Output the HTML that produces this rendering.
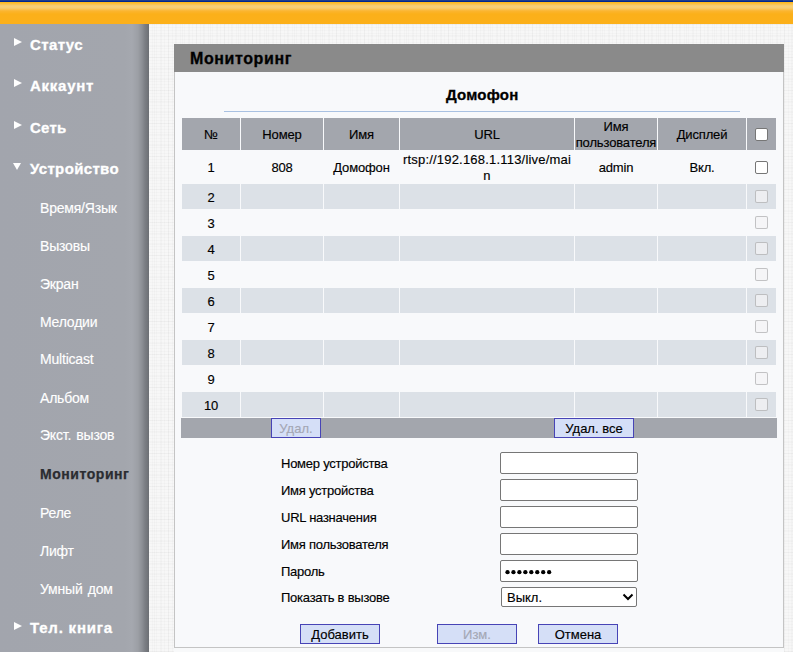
<!DOCTYPE html>
<html><head><meta charset="utf-8"><style>
*{box-sizing:border-box}
html,body{margin:0;padding:0;width:793px;height:652px;overflow:hidden}
body{font-family:"Liberation Sans",sans-serif;-webkit-text-stroke:0.15px currentColor;background-color:#f7f7f7;background-image:repeating-linear-gradient(90deg,rgba(0,0,0,0.016) 0,rgba(0,0,0,0.016) 1px,transparent 1px,transparent 4px),repeating-linear-gradient(90deg,rgba(0,0,0,0.018) 0,rgba(0,0,0,0.018) 1px,transparent 1px,transparent 7px),repeating-linear-gradient(0deg,rgba(0,0,0,0.015) 0,rgba(0,0,0,0.015) 1px,transparent 1px,transparent 3px),repeating-linear-gradient(0deg,rgba(0,0,0,0.02) 0,rgba(0,0,0,0.02) 1px,transparent 1px,transparent 11px);position:relative;color:#000}
.a{position:absolute;white-space:nowrap}
#topline{left:0;top:0;width:793px;height:2px;background:linear-gradient(#1e3c8c 0,#1e3c8c 1px,#00288f 1px)}
#topbar{left:0;top:2px;width:793px;height:22px;background:linear-gradient(#ffb810 0,#fbc24a 2px,#f7d07a 4px,#f8cd70 6px,#fbb530 9px,#fbb01a 12px,#fcb01a 100%)}
#side{left:0;top:24px;width:149px;height:628px;background:linear-gradient(90deg,#a2a5ad 0,#a3a6ad 125px,#a5a8af 132px,#9c9fa5 138px,#8c8f95 142px,#7b7e84 145px,#6c6f74 149px)}
.m{color:#fff;font-weight:bold;font-size:15px;line-height:17px;letter-spacing:0.55px;-webkit-text-stroke:0.3px #fff}
.s{color:#fff;font-size:14px;line-height:16px;letter-spacing:-0.2px;word-spacing:1.5px}
.cur{color:#2a2c30;font-weight:bold;letter-spacing:0.55px;word-spacing:0;-webkit-text-stroke:0.25px #2a2c30}
.tri{width:0;height:0;border-top:4.5px solid transparent;border-bottom:4.5px solid transparent;border-left:8px solid #fff}
.trid{width:0;height:0;border-left:4px solid transparent;border-right:4px solid transparent;border-top:7px solid #fff}
#panel{left:174px;top:44px;width:610px;height:604px;background:#f8f9fb;border:1px solid #c4c4c4;border-top:none}
#ph{left:174px;top:44px;width:610px;height:28px;background:#8a8a8a}
.c{display:flex;align-items:center;justify-content:center;text-align:center;font-size:13px;line-height:16px;letter-spacing:-0.15px}
.hd{padding-top:2px}
.hd{background:#a3a6ad}
.ev{background:#dce1e7}
.cb{position:absolute;width:13px;height:13px;border:1px solid #767676;border-radius:2px;background:#fff}
.cbd{border-color:rgba(118,118,118,0.4);background:rgba(244,244,245,0.7)}
.lbl{font-size:13px;line-height:16px;letter-spacing:-0.25px}
.inp{position:absolute;left:500px;width:138px;height:22px;border:1px solid #767676;border-radius:2px;background:#fff}
.btn{position:absolute;height:20px;border:1px solid #4744b6;background:#d5dff7;font-size:13px;display:flex;align-items:center;justify-content:center}
</style></head><body>
<div id="topline" class="a"></div><div id="topbar" class="a"></div>
<div id="side" class="a"></div>
<div class="a m" style="left:30px;top:36.3px;letter-spacing:0.4px">Статус</div>
<div class="a tri" style="left:14px;top:38px"></div>
<div class="a m" style="left:30px;top:77.3px;letter-spacing:0.75px">Аккаунт</div>
<div class="a tri" style="left:14px;top:79px"></div>
<div class="a m" style="left:30px;top:119.3px;letter-spacing:0.25px">Сеть</div>
<div class="a tri" style="left:14px;top:121px"></div>
<div class="a m" style="left:30px;top:160.3px;letter-spacing:0.35px">Устройство</div>
<div class="a trid" style="left:13px;top:163px"></div>
<div class="a s" style="left:40px;top:200.1px">Время/Язык</div>
<div class="a s" style="left:40px;top:238.1px">Вызовы</div>
<div class="a s" style="left:40px;top:276.1px">Экран</div>
<div class="a s" style="left:40px;top:314.1px">Мелодии</div>
<div class="a s" style="left:40px;top:351.1px">Multicast</div>
<div class="a s" style="left:40px;top:390.1px">Альбом</div>
<div class="a s" style="left:40px;top:427.1px">Экст. вызов</div>
<div class="a s cur" style="left:40px;top:466.1px">Мониторинг</div>
<div class="a s" style="left:40px;top:505.1px">Реле</div>
<div class="a s" style="left:40px;top:543.1px">Лифт</div>
<div class="a s" style="left:40px;top:581.1px">Умный дом</div>
<div class="a m" style="left:30px;top:619.3px;letter-spacing:0.8px">Тел. книга</div><div class="a tri" style="left:14px;top:622px"></div>
<div class="a" style="left:174px;top:647px;width:610px;height:5px;background:#f8f9fa"></div><div id="panel" class="a"></div>
<div id="ph" class="a"></div><div class="a" style="left:190px;top:50.0px;font-size:16px;line-height:18px;font-weight:bold;letter-spacing:0.6px;-webkit-text-stroke:0.3px #000">Мониторинг</div>
<div class="a" style="left:446px;top:86.3px;font-size:15px;line-height:17px;font-weight:bold;letter-spacing:0.2px;-webkit-text-stroke:0.3px #000">Домофон</div>
<div class="a" style="left:224px;top:111px;width:516px;height:1px;background:#a9c1e2"></div>
<div class="a c hd" style="left:182px;top:118px;width:58px;height:32px">№</div>
<div class="a c hd" style="left:241px;top:118px;width:82px;height:32px">Номер</div>
<div class="a c hd" style="left:324px;top:118px;width:75px;height:32px">Имя</div>
<div class="a c hd" style="left:400px;top:118px;width:174px;height:32px">URL</div>
<div class="a c hd" style="left:575px;top:118px;width:82px;height:32px">Имя<br>пользователя</div>
<div class="a c hd" style="left:658px;top:118px;width:88px;height:32px">Дисплей</div>
<div class="a c hd" style="left:747px;top:118px;width:29px;height:32px"></div>
<div class="cb" style="left:755px;top:128px"></div>
<div class="a c " style="left:182px;top:151px;width:58px;height:33px">1</div>
<div class="a c " style="left:241px;top:151px;width:82px;height:33px">808</div>
<div class="a c " style="left:324px;top:151px;width:75px;height:33px">Домофон</div>
<div class="a c " style="left:400px;top:151px;width:174px;height:33px"><span style='letter-spacing:0.2px'>rtsp://192.168.1.113/live/mai<br>n</span></div>
<div class="a c " style="left:575px;top:151px;width:82px;height:33px">admin</div>
<div class="a c " style="left:658px;top:151px;width:88px;height:33px">Вкл.</div>
<div class="a c " style="left:747px;top:151px;width:29px;height:33px"></div>
<div class="cb" style="left:755px;top:161px"></div>
<div class="a c ev" style="left:182px;top:184px;width:58px;height:25px;padding-top:2px">2</div>
<div class="a c ev" style="left:241px;top:184px;width:82px;height:25px;padding-top:2px"></div>
<div class="a c ev" style="left:324px;top:184px;width:75px;height:25px;padding-top:2px"></div>
<div class="a c ev" style="left:400px;top:184px;width:174px;height:25px;padding-top:2px"></div>
<div class="a c ev" style="left:575px;top:184px;width:82px;height:25px;padding-top:2px"></div>
<div class="a c ev" style="left:658px;top:184px;width:88px;height:25px;padding-top:2px"></div>
<div class="a c ev" style="left:747px;top:184px;width:29px;height:25px;padding-top:2px"></div>
<div class="cb cbd" style="left:755px;top:190px"></div>
<div class="a c " style="left:182px;top:210px;width:58px;height:25px;padding-top:2px">3</div>
<div class="a c " style="left:241px;top:210px;width:82px;height:25px;padding-top:2px"></div>
<div class="a c " style="left:324px;top:210px;width:75px;height:25px;padding-top:2px"></div>
<div class="a c " style="left:400px;top:210px;width:174px;height:25px;padding-top:2px"></div>
<div class="a c " style="left:575px;top:210px;width:82px;height:25px;padding-top:2px"></div>
<div class="a c " style="left:658px;top:210px;width:88px;height:25px;padding-top:2px"></div>
<div class="a c " style="left:747px;top:210px;width:29px;height:25px;padding-top:2px"></div>
<div class="cb cbd" style="left:755px;top:216px"></div>
<div class="a c ev" style="left:182px;top:236px;width:58px;height:25px;padding-top:2px">4</div>
<div class="a c ev" style="left:241px;top:236px;width:82px;height:25px;padding-top:2px"></div>
<div class="a c ev" style="left:324px;top:236px;width:75px;height:25px;padding-top:2px"></div>
<div class="a c ev" style="left:400px;top:236px;width:174px;height:25px;padding-top:2px"></div>
<div class="a c ev" style="left:575px;top:236px;width:82px;height:25px;padding-top:2px"></div>
<div class="a c ev" style="left:658px;top:236px;width:88px;height:25px;padding-top:2px"></div>
<div class="a c ev" style="left:747px;top:236px;width:29px;height:25px;padding-top:2px"></div>
<div class="cb cbd" style="left:755px;top:242px"></div>
<div class="a c " style="left:182px;top:262px;width:58px;height:25px;padding-top:2px">5</div>
<div class="a c " style="left:241px;top:262px;width:82px;height:25px;padding-top:2px"></div>
<div class="a c " style="left:324px;top:262px;width:75px;height:25px;padding-top:2px"></div>
<div class="a c " style="left:400px;top:262px;width:174px;height:25px;padding-top:2px"></div>
<div class="a c " style="left:575px;top:262px;width:82px;height:25px;padding-top:2px"></div>
<div class="a c " style="left:658px;top:262px;width:88px;height:25px;padding-top:2px"></div>
<div class="a c " style="left:747px;top:262px;width:29px;height:25px;padding-top:2px"></div>
<div class="cb cbd" style="left:755px;top:268px"></div>
<div class="a c ev" style="left:182px;top:288px;width:58px;height:25px;padding-top:2px">6</div>
<div class="a c ev" style="left:241px;top:288px;width:82px;height:25px;padding-top:2px"></div>
<div class="a c ev" style="left:324px;top:288px;width:75px;height:25px;padding-top:2px"></div>
<div class="a c ev" style="left:400px;top:288px;width:174px;height:25px;padding-top:2px"></div>
<div class="a c ev" style="left:575px;top:288px;width:82px;height:25px;padding-top:2px"></div>
<div class="a c ev" style="left:658px;top:288px;width:88px;height:25px;padding-top:2px"></div>
<div class="a c ev" style="left:747px;top:288px;width:29px;height:25px;padding-top:2px"></div>
<div class="cb cbd" style="left:755px;top:294px"></div>
<div class="a c " style="left:182px;top:314px;width:58px;height:25px;padding-top:2px">7</div>
<div class="a c " style="left:241px;top:314px;width:82px;height:25px;padding-top:2px"></div>
<div class="a c " style="left:324px;top:314px;width:75px;height:25px;padding-top:2px"></div>
<div class="a c " style="left:400px;top:314px;width:174px;height:25px;padding-top:2px"></div>
<div class="a c " style="left:575px;top:314px;width:82px;height:25px;padding-top:2px"></div>
<div class="a c " style="left:658px;top:314px;width:88px;height:25px;padding-top:2px"></div>
<div class="a c " style="left:747px;top:314px;width:29px;height:25px;padding-top:2px"></div>
<div class="cb cbd" style="left:755px;top:320px"></div>
<div class="a c ev" style="left:182px;top:340px;width:58px;height:25px;padding-top:2px">8</div>
<div class="a c ev" style="left:241px;top:340px;width:82px;height:25px;padding-top:2px"></div>
<div class="a c ev" style="left:324px;top:340px;width:75px;height:25px;padding-top:2px"></div>
<div class="a c ev" style="left:400px;top:340px;width:174px;height:25px;padding-top:2px"></div>
<div class="a c ev" style="left:575px;top:340px;width:82px;height:25px;padding-top:2px"></div>
<div class="a c ev" style="left:658px;top:340px;width:88px;height:25px;padding-top:2px"></div>
<div class="a c ev" style="left:747px;top:340px;width:29px;height:25px;padding-top:2px"></div>
<div class="cb cbd" style="left:755px;top:346px"></div>
<div class="a c " style="left:182px;top:366px;width:58px;height:25px;padding-top:2px">9</div>
<div class="a c " style="left:241px;top:366px;width:82px;height:25px;padding-top:2px"></div>
<div class="a c " style="left:324px;top:366px;width:75px;height:25px;padding-top:2px"></div>
<div class="a c " style="left:400px;top:366px;width:174px;height:25px;padding-top:2px"></div>
<div class="a c " style="left:575px;top:366px;width:82px;height:25px;padding-top:2px"></div>
<div class="a c " style="left:658px;top:366px;width:88px;height:25px;padding-top:2px"></div>
<div class="a c " style="left:747px;top:366px;width:29px;height:25px;padding-top:2px"></div>
<div class="cb cbd" style="left:755px;top:372px"></div>
<div class="a c ev" style="left:182px;top:392px;width:58px;height:25px;padding-top:2px">10</div>
<div class="a c ev" style="left:241px;top:392px;width:82px;height:25px;padding-top:2px"></div>
<div class="a c ev" style="left:324px;top:392px;width:75px;height:25px;padding-top:2px"></div>
<div class="a c ev" style="left:400px;top:392px;width:174px;height:25px;padding-top:2px"></div>
<div class="a c ev" style="left:575px;top:392px;width:82px;height:25px;padding-top:2px"></div>
<div class="a c ev" style="left:658px;top:392px;width:88px;height:25px;padding-top:2px"></div>
<div class="a c ev" style="left:747px;top:392px;width:29px;height:25px;padding-top:2px"></div>
<div class="cb cbd" style="left:755px;top:398px"></div>
<div class="a" style="left:181px;top:418px;width:596px;height:20px;background:#a3a6ad"></div>
<div class="btn" style="left:271px;top:418px;width:50px;color:#a4a7b4">Удал.</div>
<div class="btn" style="left:554px;top:418px;width:80px">Удал. все</div>
<div class="a lbl" style="left:281px;top:455.5px">Номер устройства</div>
<div class="a lbl" style="left:281px;top:482.5px">Имя устройства</div>
<div class="a lbl" style="left:281px;top:509.5px">URL назначения</div>
<div class="a lbl" style="left:281px;top:536.5px">Имя пользователя</div>
<div class="a lbl" style="left:281px;top:563.5px">Пароль</div>
<div class="a lbl" style="left:281px;top:589.5px">Показать в вызове</div>
<div class="inp" style="top:452px"></div>
<div class="inp" style="top:479px"></div>
<div class="inp" style="top:506px"></div>
<div class="inp" style="top:533px"></div>
<div class="inp" style="top:560px"></div>
<svg class="a" style="left:500px;top:560px" width="60" height="22"><circle cx="7.50" cy="12.2" r="2.15" fill="#000"/><circle cx="13.45" cy="12.2" r="2.15" fill="#000"/><circle cx="19.40" cy="12.2" r="2.15" fill="#000"/><circle cx="25.35" cy="12.2" r="2.15" fill="#000"/><circle cx="31.30" cy="12.2" r="2.15" fill="#000"/><circle cx="37.25" cy="12.2" r="2.15" fill="#000"/><circle cx="43.20" cy="12.2" r="2.15" fill="#000"/><circle cx="49.15" cy="12.2" r="2.15" fill="#000"/></svg>
<div class="a" style="left:501px;top:587px;width:136px;height:20px;border:1px solid #767676;border-radius:2px;background:#fff;font-size:13px;line-height:20px;padding-left:5px">Выкл.</div>
<svg class="a" style="left:622px;top:592px" width="12" height="10"><path d="M1.5 2.5 L6 7 L10.5 2.5" stroke="#000" stroke-width="2" fill="none"/></svg>
<div class="btn" style="left:300px;top:624px;width:80px">Добавить</div>
<div class="btn" style="left:437px;top:624px;width:80px;color:#a4a7b4">Изм.</div>
<div class="btn" style="left:538px;top:624px;width:80px">Отмена</div>
</body></html>
